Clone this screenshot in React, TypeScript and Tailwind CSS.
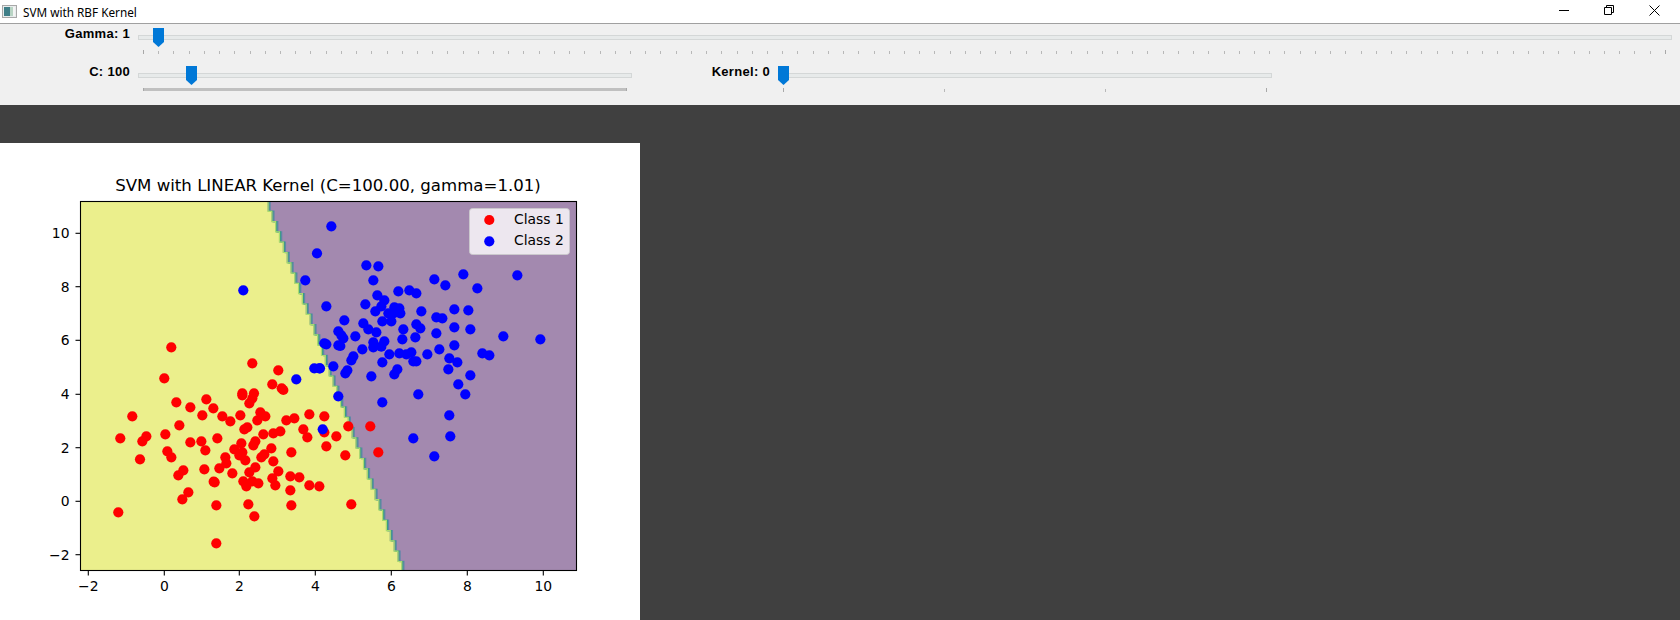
const RED_ZOOM: number[][] = [
  [109, 37], [151, 52], [199, 28], [220, 55], [187, 76], [247, 79], [271, 94], [301, 76], [307, 16], [307, 10], [342, 10],
  [337, 25], [328, 40], [361, 67], [376, 79], [352, 91], [430, 0], [508, 73], [553, 79], [463, 85], [439, 91],
  [322, 112], [313, 118], [118, 106], [76, 133], [19, 139], [7, 154], [151, 157], [184, 154], [232, 145], [196, 181],
  [82, 184], [94, 202], [0, 208], [370, 133], [400, 130], [421, 124], [490, 118], [502, 142], [553, 127], [589, 139],
  [559, 169], [304, 160], [346, 154], [340, 166], [283, 178], [307, 187], [298, 196], [316, 211], [394, 175], [373, 193],
  [364, 202], [454, 187], [400, 214], [256, 202], [259, 220], [238, 235], [193, 238], [130, 241], [115, 256], [346, 232],
  [328, 247], [277, 250], [415, 244], [397, 265], [451, 259], [478, 262], [406, 286], [508, 286], [538, 289], [451, 301],
  [310, 274], [337, 274], [355, 280], [319, 289], [221, 275], [224, 277], [145, 307], [127, 328], [229, 346], [325, 343], [454, 346],
  [343, 379],
];

const RED_POINTS: number[][] = [
  ...RED_ZOOM.map(([x, y]) => [140 + x / 3, 390 + y / 3]),
  [132.3, 416.3], [120.3, 438.3], [118.3, 512.3], [171.3, 347.3], [252.3, 363.3], [278.3, 370.3], [164.3, 378.3],
  [272.3, 384.3], [281.7, 388.3], [216.3, 543.3], [348.3, 426.3], [370.3, 426.3], [345.3, 455.3], [378.3, 452.3],
  [351.3, 504.3],
];

const BLUE_ZOOM: number[][] = [
  [34, 259], [139, 376], [175, 379], [160, 421], [343, 418], [376, 436], [430, 403], [472, 445], [592, 406], [235, 454],
  [268, 451], [289, 460], [172, 466], [193, 481], [136, 493], [19, 499], [184, 499], [166, 514], [223, 502], [238, 505],
  [241, 520], [304, 514], [403, 508], [445, 511], [349, 532], [367, 535], [73, 541], [187, 544], [214, 544], [205, 520],
  [220, 520], [130, 550], [145, 568], [169, 577], [289, 553], [301, 565], [250, 568], [403, 562], [451, 568], [55, 574],
  [64, 586], [70, 595], [106, 589], [349, 580], [550, 589], [661, 598], [247, 598], [286, 592], [160, 607], [193, 604],
  [184, 620], [160, 622], [61, 618], [55, 616], [19, 613], [13, 610], [127, 628], [358, 628], [403, 616], [238, 640],
  [208, 643], [259, 643], [274, 637], [322, 643], [487, 640], [508, 646], [100, 649], [94, 661], [388, 655], [412, 667],
  [187, 667], [280, 664], [289, 664], [40, 679], [0, 685], [385, 688], [232, 688], [223, 703], [82, 691], [76, 700],
  [154, 709], [451, 706],
];

const BLUE_POINTS: number[][] = [
  ...BLUE_ZOOM.map(([x, y]) => [320 + x / 3, 140 + y / 3]),
  [317, 253.3], [243.3, 290.3], [305.3, 280.3], [314.3, 368.3], [319.3, 368.3], [296.3, 379.3], [338.3, 396.3],
  [418.3, 394.3], [382.3, 402.3], [449.3, 415.3], [458.3, 384.3], [465.3, 394.3], [413.3, 438.3], [450.3, 436.3],
  [434.3, 456.3], [322.7, 429.3],
];

const X_TICKS = [
  { x: 88.3, label: "−2" },
  { x: 164.3, label: "0" },
  { x: 239.3, label: "2" },
  { x: 315.3, label: "4" },
  { x: 391.3, label: "6" },
  { x: 467.3, label: "8" },
  { x: 543.3, label: "10" },
];

const Y_TICKS = [
  { y: 233.3, label: "10" },
  { y: 286.7, label: "8" },
  { y: 340.3, label: "6" },
  { y: 394.3, label: "4" },
  { y: 447.7, label: "2" },
  { y: 501.3, label: "0" },
  { y: 554.7, label: "−2" },
];

// staircase edge of the decision regions, one step per mesh column
function stairPath(shift: number) {
  let d = `M${267.5 + shift} 201`;
  let x = 267.5;
  let y = 201;
  while (y < 570) {
    y = Math.min(y + 10.3, 570);
    d += `L${x + shift} ${y}`;
    if (y < 570) {
      x += 3.82;
      d += `L${x + shift} ${y}`;
    }
  }
  return d;
}

function SvmChart() {
  const edge = stairPath(0);
  return (
    <svg viewBox="0 143 640 477" className="block h-[477px] w-[640px]" fontFamily="'DejaVu Sans', sans-serif">
      <rect x="0" y="143" width="640" height="477" fill="#ffffff" />
      <rect x="80.5" y="201.5" width="496" height="369" fill="#a389af" />
      <path d={`${edge}L80.5 570L80.5 201Z`} fill="#ebef8c" />
      <path d={stairPath(2.6)} fill="none" stroke="#5f87a8" strokeWidth="1.4" />
      <path d={stairPath(1.5)} fill="none" stroke="#3a9a86" strokeWidth="1.2" />
      <path d={stairPath(0.5)} fill="none" stroke="#a9dc6e" strokeWidth="1.2" />
      {RED_POINTS.map(([x, y], i) => (
        <circle key={`r${i}`} cx={x} cy={y} r="5.1" fill="#ff0000" />
      ))}
      {BLUE_POINTS.map(([x, y], i) => (
        <circle key={`b${i}`} cx={x} cy={y} r="5.1" fill="#0000ff" />
      ))}
      <rect x="80.5" y="201.5" width="496" height="369" fill="none" stroke="#000000" strokeWidth="1.1" />
      {X_TICKS.map((t) => (
        <g key={t.label}>
          <line x1={t.x} x2={t.x} y1="571" y2="575.5" stroke="#000000" strokeWidth="1.1" />
          <text x={t.x} y="590.5" textAnchor="middle" fontSize="13.9" fill="#000000">
            {t.label}
          </text>
        </g>
      ))}
      {Y_TICKS.map((t) => (
        <g key={t.label}>
          <line x1="75.5" x2="80" y1={t.y} y2={t.y} stroke="#000000" strokeWidth="1.1" />
          <text x="69.5" y={t.y + 5} textAnchor="end" fontSize="13.9" fill="#000000">
            {t.label}
          </text>
        </g>
      ))}
      <text x="328" y="191" textAnchor="middle" fontSize="16.6" fill="#000000">
        SVM with LINEAR Kernel (C=100.00, gamma=1.01)
      </text>
      <rect x="469.5" y="208.5" width="100" height="46" rx="3" fill="#ffffff" fillOpacity="0.8" stroke="#cccccc" strokeOpacity="0.8" />
      <circle cx="489.3" cy="220" r="5.1" fill="#ff0000" />
      <circle cx="489.3" cy="241.3" r="5.1" fill="#0000ff" />
      <text x="514" y="224" fontSize="13.9" fill="#000000">
        Class 1
      </text>
      <text x="514" y="245" fontSize="13.9" fill="#000000">
        Class 2
      </text>
    </svg>
  );
}

function Thumb({ left }: { left: number }) {
  return (
    <svg
      width="11"
      height="19"
      viewBox="0 0 11 19"
      className="absolute top-0"
      style={{ left }}
    >
      <path d="M0 0H11V14L5.5 19L0 14Z" fill="#0078d7" />
    </svg>
  );
}

function Slider({
  width,
  thumb,
  ticksWidth,
  tickCount,
  dense,
}: {
  width: number;
  thumb: number;
  ticksWidth: number;
  tickCount: number;
  dense?: boolean;
}) {
  return (
    <div className="relative h-[27px] shrink-0" style={{ width }}>
      <div className="pt-[7px]">
        <div className="h-[5px] border border-[#d4d7d7] bg-[#e7eaea]" />
      </div>
      <Thumb left={thumb} />
      <div className="mt-[10px] ml-[5px] flex justify-between" style={{ width: ticksWidth }}>
        {dense ? (
          <div className="h-[3px] w-full border-l border-r border-[#a8a8a8] bg-[#c0c0c0]" />
        ) : (
          Array.from({ length: tickCount }, (_, i) => (
            <div
              key={i}
              className={i === 0 || i === tickCount - 1 ? "h-[4px] w-px bg-[#a8a8a8]" : "mt-[1px] h-[3px] w-px bg-[#b8b8b8]"}
            />
          ))
        )}
      </div>
    </div>
  );
}

function SliderLabel({ text, width }: { text: string; width: number }) {
  return (
    <div
      className="-mt-[1px] shrink-0 pr-[8px] text-right font-['Liberation_Sans',sans-serif] text-[13px] leading-[13px] font-bold tracking-[0.3px] text-black"
      style={{ width }}
    >
      {text}
    </div>
  );
}

export default function App() {
  return (
    <div className="flex h-[620px] w-[1680px] flex-col overflow-hidden bg-[#404040]">
      <header className="flex h-[24px] items-center justify-between border-b border-[#a0a0a0] bg-white">
        <div className="flex items-center">
          <svg width="15" height="13" viewBox="0 0 15 13" className="ml-[2px]">
            <rect x="0.5" y="0.5" width="14" height="12" fill="#e8ecec" stroke="#a8a8a8" />
            <rect x="2" y="2" width="6" height="9" fill="#3f7f88" />
            <rect x="8" y="2" width="3" height="9" fill="#b8d4c4" />
            <rect x="11" y="2" width="2" height="9" fill="#f4f4f4" />
          </svg>
          <span className="ml-[6px] font-['Noto_Sans',sans-serif] text-[11.75px] leading-[16px] text-black">SVM with RBF Kernel</span>
        </div>
        <div className="mr-[20px] mb-[3px] flex items-center gap-[35px]">
          <svg width="10" height="10" viewBox="0 0 10 10">
            <path d="M0 5.5H10" stroke="#000000" />
          </svg>
          <svg width="10" height="10" viewBox="0 0 10 10">
            <path d="M0.5 2.5H7.5V9.5H0.5ZM2.5 2.5V0.5H9.5V7.5H7.5" fill="none" stroke="#000000" />
          </svg>
          <svg width="11" height="11" viewBox="0 0 11 11">
            <path d="M0.5 0.5L10.5 10.5M10.5 0.5L0.5 10.5" stroke="#000000" />
          </svg>
        </div>
      </header>

      <section className="flex h-[81px] flex-col bg-[#f0f0f0] pt-[4px]">
        <div className="flex">
          <SliderLabel text="Gamma: 1" width={138} />
          <Slider width={1534} thumb={15} ticksWidth={1524} tickCount={101} />
        </div>
        <div className="mt-[11px] flex">
          <SliderLabel text="C: 100" width={138} />
          <Slider width={494} thumb={48} ticksWidth={484} tickCount={2} dense />
          <SliderLabel text="Kernel: 0" width={146} />
          <Slider width={494} thumb={0} ticksWidth={484} tickCount={4} />
        </div>
      </section>

      <main className="pt-[38px]">
        <SvmChart />
      </main>
    </div>
  );
}
